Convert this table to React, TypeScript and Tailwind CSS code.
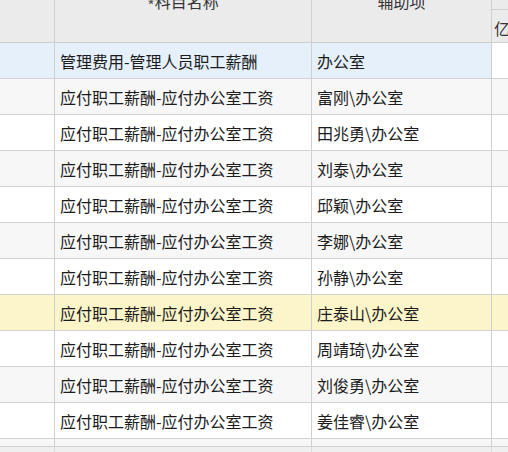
import React from "react";

const rows: { a: string; b: string; bg: string; last: string }[] = [
  { a: "管理费用-管理人员职工薪酬", b: "办公室", bg: "bg-[#e5f0fb]", last: "bg-white" },
  { a: "应付职工薪酬-应付办公室工资", b: "富刚\\办公室", bg: "bg-[#f7f7f7]", last: "bg-[#f7f7f7]" },
  { a: "应付职工薪酬-应付办公室工资", b: "田兆勇\\办公室", bg: "bg-white", last: "bg-white" },
  { a: "应付职工薪酬-应付办公室工资", b: "刘泰\\办公室", bg: "bg-[#f7f7f7]", last: "bg-[#f7f7f7]" },
  { a: "应付职工薪酬-应付办公室工资", b: "邱颖\\办公室", bg: "bg-white", last: "bg-white" },
  { a: "应付职工薪酬-应付办公室工资", b: "李娜\\办公室", bg: "bg-[#f7f7f7]", last: "bg-[#f7f7f7]" },
  { a: "应付职工薪酬-应付办公室工资", b: "孙静\\办公室", bg: "bg-white", last: "bg-white" },
  { a: "应付职工薪酬-应付办公室工资", b: "庄泰山\\办公室", bg: "bg-[#fcf5c9]", last: "bg-[#fcf5c9]" },
  { a: "应付职工薪酬-应付办公室工资", b: "周靖琦\\办公室", bg: "bg-white", last: "bg-white" },
  { a: "应付职工薪酬-应付办公室工资", b: "刘俊勇\\办公室", bg: "bg-[#f7f7f7]", last: "bg-[#f7f7f7]" },
  { a: "应付职工薪酬-应付办公室工资", b: "姜佳睿\\办公室", bg: "bg-white", last: "bg-white" },
];

const font = {
  fontFamily: '"Noto Sans CJK SC", "Noto Sans", sans-serif',
};

export default function App() {
  return (
    <div
      className="w-[508px] h-[452px] overflow-hidden bg-[#efefef] text-[16px] text-[#1c1c1c]"
      style={font}
    >
      <div className="-mt-[20px]">
        {/* header */}
        <div className="flex h-[63px] bg-[#ebebeb] border-b border-[#cfcfcf]">
          <div className="w-[55px] shrink-0 border-r border-[#cfcfcf]" />
          <div className="w-[257px] shrink-0 border-r border-[#cfcfcf] flex justify-center pt-[13px] leading-[16px] text-[#333]">
            <span className="relative top-[4px] text-[#555]">*</span>科目名称
          </div>
          <div className="w-[180px] shrink-0 border-r border-[#cfcfcf] flex justify-center pt-[13px] leading-[16px] text-[#333]">
            辅助项
          </div>
          <div className="flex-1 flex flex-col">
            <div className="h-[30px] border-b border-[#cfcfcf]" />
            <div className="pl-[2px] pt-[10px] leading-[16px] text-[#333] whitespace-nowrap">亿</div>
          </div>
        </div>
        {rows.map((r, i) => (
          <div key={i} className="flex h-[36px] border-b border-[#d2d2d2]">
            <div className={`w-[55px] shrink-0 border-r border-[#cfcfcf] ${r.bg}`} />
            <div
              className={`w-[257px] shrink-0 border-r border-[#cfcfcf] ${r.bg} flex items-center pl-[5px] whitespace-nowrap`}
            >
              {r.a}
            </div>
            <div
              className={`w-[180px] shrink-0 border-r border-[#cfcfcf] ${r.bg} flex items-center pl-[5px] whitespace-nowrap`}
            >
              {r.b}
            </div>
            <div className={`flex-1 ${r.last}`} />
          </div>
        ))}
        <div className="flex h-[8px] border-b border-[#d2d2d2] bg-[#f7f7f7]">
          <div className="w-[55px] shrink-0 border-r border-[#cfcfcf]" />
          <div className="w-[257px] shrink-0 border-r border-[#cfcfcf]" />
          <div className="w-[180px] shrink-0 border-r border-[#cfcfcf]" />
          <div className="flex-1" />
        </div>
        <div className="flex h-[20px]">
          <div className="w-[55px] shrink-0 border-r border-[#dcdcdc]" />
          <div className="w-[257px] shrink-0 border-r border-[#dcdcdc]" />
          <div className="w-[180px] shrink-0 border-r border-[#dcdcdc]" />
          <div className="flex-1" />
        </div>
      </div>
    </div>
  );
}
